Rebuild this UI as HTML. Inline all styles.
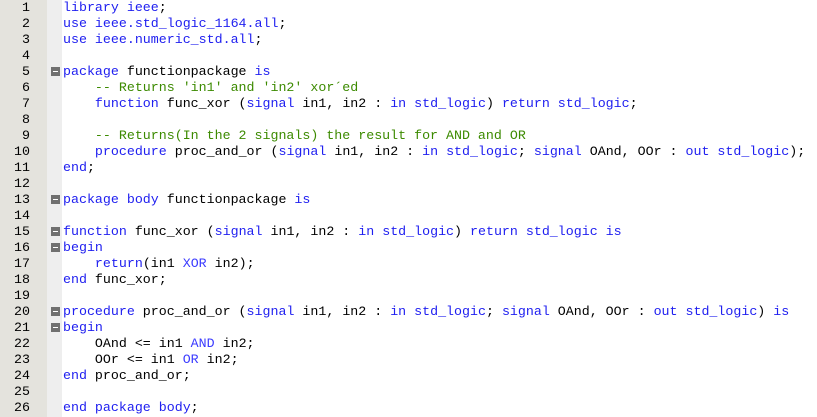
<!DOCTYPE html>
<html><head><style>
html,body{margin:0;padding:0;background:#fff;width:817px;height:417px;overflow:hidden}
.g{position:absolute;left:0;top:0;width:47px;height:417px;background:#e4e3dd}
.f{position:absolute;left:47px;top:0;width:15px;height:417px;background-color:#f4f4f4;background-image:radial-gradient(#dedede 0.6px,transparent 0.8px);background-size:2px 2px}
.l{position:absolute;left:0;height:16px;line-height:16px;font-family:"Liberation Mono","DejaVu Sans Mono","Courier New",monospace;font-size:13.3px;white-space:pre;color:#000}
.n{width:30px;text-align:right;color:#000}
.c{left:63px}
.k{color:#2020f0}
.o{color:#3a3aff}
.m{color:#3c8a00}
.b{position:absolute;left:51px;width:9px;height:9px;background:#707070}
.b:after{content:"";position:absolute;left:2px;top:4px;width:5px;height:1px;background:#fff}
</style></head><body>
<div class="g"></div><div class="f"></div>
<div class="l n" style="top:0">1</div><div class="l c" style="top:0"><span class="k">library</span> <span class="k">ieee</span>;</div>
<div class="l n" style="top:16px">2</div><div class="l c" style="top:16px"><span class="k">use ieee.std_logic_1164.all</span>;</div>
<div class="l n" style="top:32px">3</div><div class="l c" style="top:32px"><span class="k">use ieee.numeric_std.all</span>;</div>
<div class="l n" style="top:48px">4</div>
<div class="l n" style="top:64px">5</div><div class="b" style="top:67px"></div><div class="l c" style="top:64px"><span class="k">package</span> functionpackage <span class="k">is</span></div>
<div class="l n" style="top:80px">6</div><div class="l c" style="top:80px">    <span class="m">-- Returns 'in1' and 'in2' xor´ed</span></div>
<div class="l n" style="top:96px">7</div><div class="l c" style="top:96px">    <span class="k">function</span> func_xor (<span class="k">signal</span> in1, in2 : <span class="k">in std_logic</span>) <span class="k">return std_logic</span>;</div>
<div class="l n" style="top:112px">8</div>
<div class="l n" style="top:128px">9</div><div class="l c" style="top:128px">    <span class="m">-- Returns(In the 2 signals) the result for AND and OR</span></div>
<div class="l n" style="top:144px">10</div><div class="l c" style="top:144px">    <span class="k">procedure</span> proc_and_or (<span class="k">signal</span> in1, in2 : <span class="k">in std_logic</span>; <span class="k">signal</span> OAnd, OOr : <span class="k">out std_logic</span>);</div>
<div class="l n" style="top:160px">11</div><div class="l c" style="top:160px"><span class="k">end</span>;</div>
<div class="l n" style="top:176px">12</div>
<div class="l n" style="top:192px">13</div><div class="b" style="top:195px"></div><div class="l c" style="top:192px"><span class="k">package body</span> functionpackage <span class="k">is</span></div>
<div class="l n" style="top:208px">14</div>
<div class="l n" style="top:224px">15</div><div class="b" style="top:227px"></div><div class="l c" style="top:224px"><span class="k">function</span> func_xor (<span class="k">signal</span> in1, in2 : <span class="k">in std_logic</span>) <span class="k">return std_logic is</span></div>
<div class="l n" style="top:240px">16</div><div class="b" style="top:243px"></div><div class="l c" style="top:240px"><span class="k">begin</span></div>
<div class="l n" style="top:256px">17</div><div class="l c" style="top:256px">    <span class="k">return</span>(in1 <span class="o">XOR</span> in2);</div>
<div class="l n" style="top:272px">18</div><div class="l c" style="top:272px"><span class="k">end</span> func_xor;</div>
<div class="l n" style="top:288px">19</div>
<div class="l n" style="top:304px">20</div><div class="b" style="top:307px"></div><div class="l c" style="top:304px"><span class="k">procedure</span> proc_and_or (<span class="k">signal</span> in1, in2 : <span class="k">in std_logic</span>; <span class="k">signal</span> OAnd, OOr : <span class="k">out std_logic</span>) <span class="k">is</span></div>
<div class="l n" style="top:320px">21</div><div class="b" style="top:323px"></div><div class="l c" style="top:320px"><span class="k">begin</span></div>
<div class="l n" style="top:336px">22</div><div class="l c" style="top:336px">    OAnd &lt;= in1 <span class="o">AND</span> in2;</div>
<div class="l n" style="top:352px">23</div><div class="l c" style="top:352px">    OOr &lt;= in1 <span class="o">OR</span> in2;</div>
<div class="l n" style="top:368px">24</div><div class="l c" style="top:368px"><span class="k">end</span> proc_and_or;</div>
<div class="l n" style="top:384px">25</div>
<div class="l n" style="top:400px">26</div><div class="l c" style="top:400px"><span class="k">end package body</span>;</div>
</body></html>
